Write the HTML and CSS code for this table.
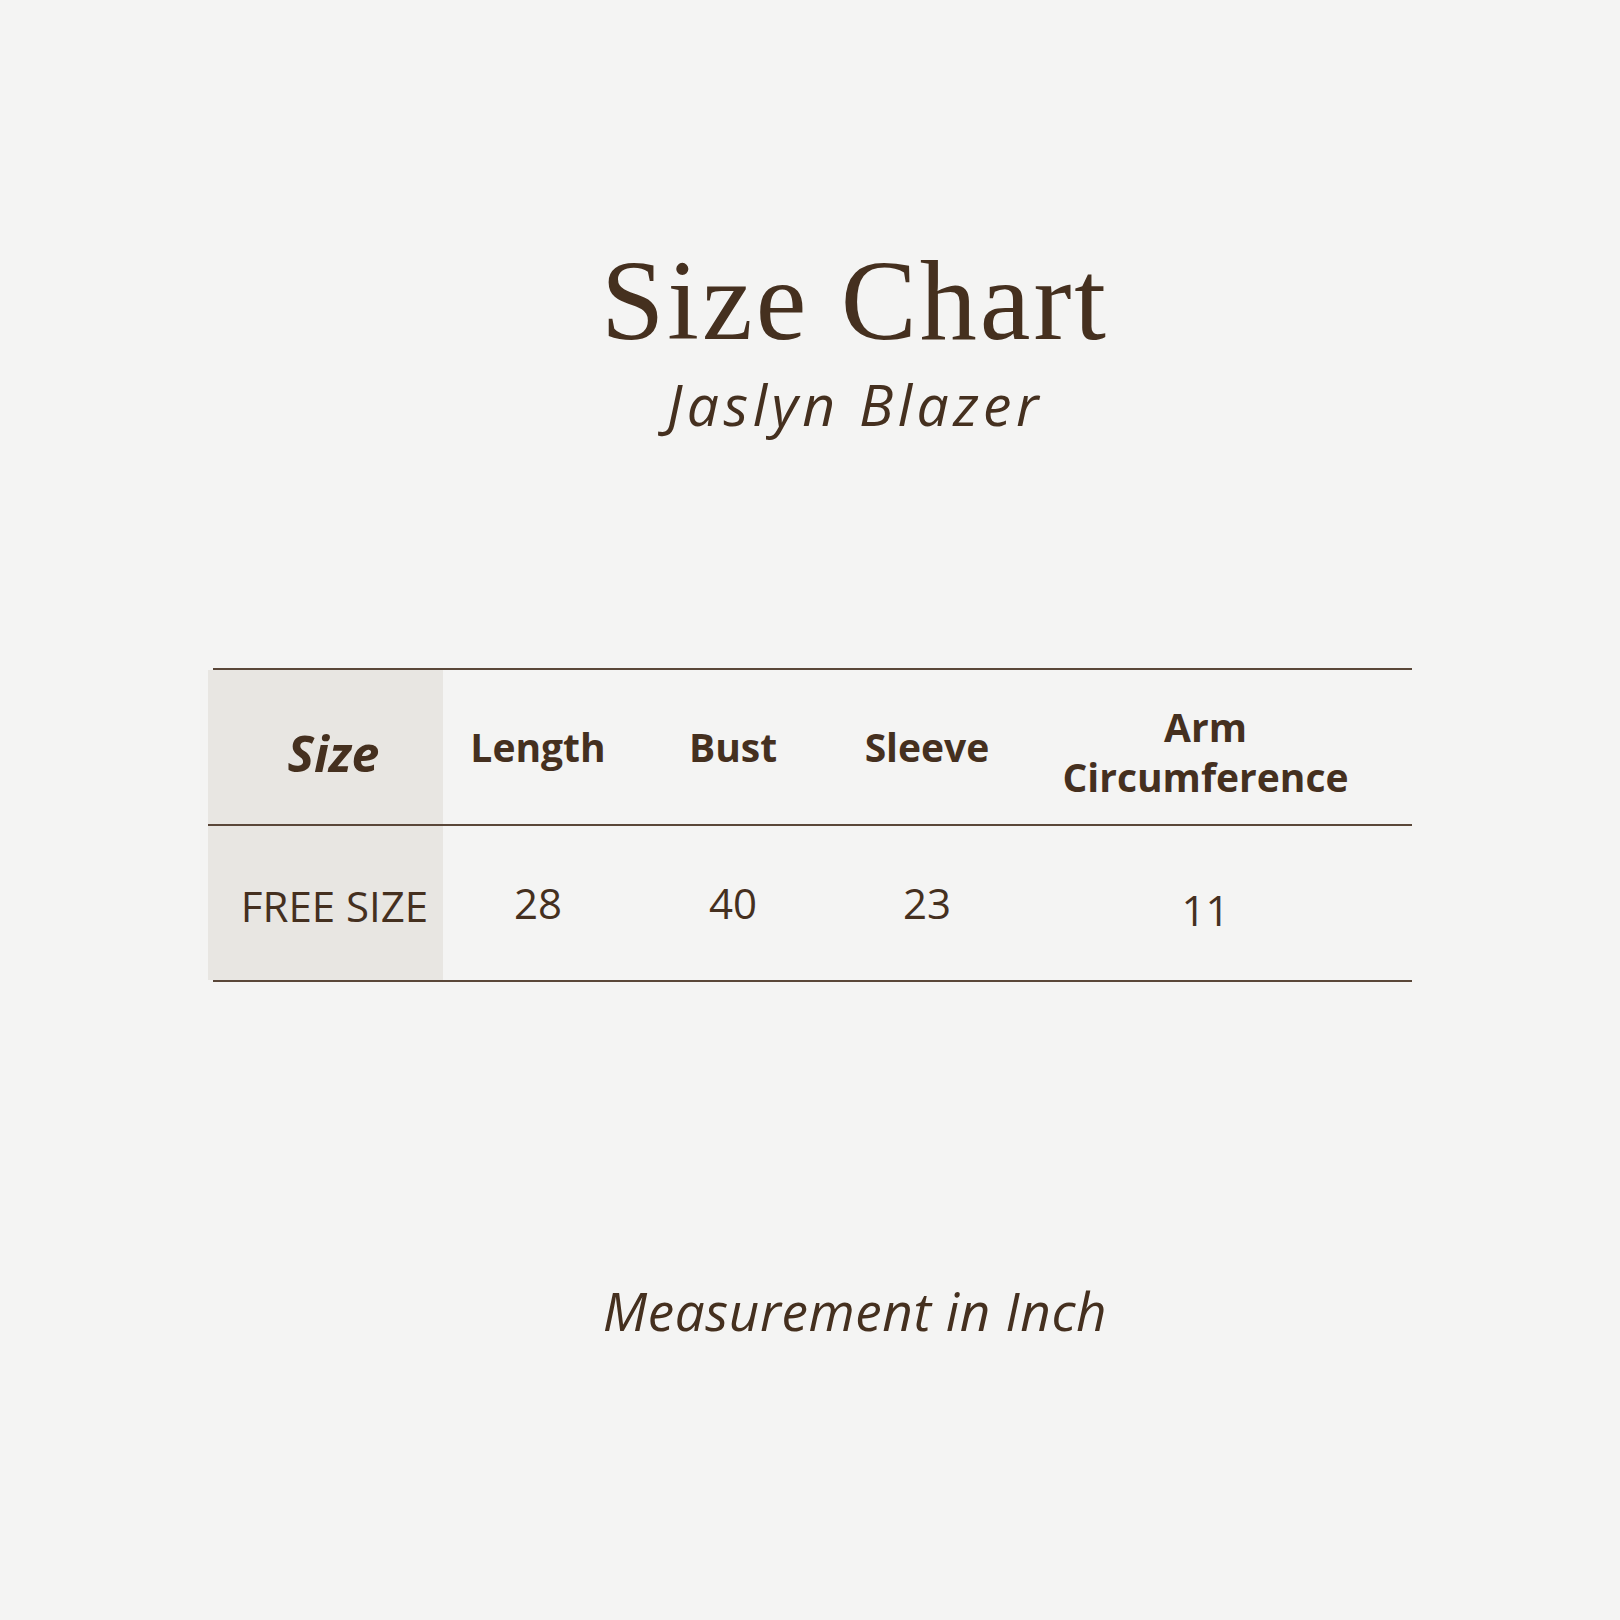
FILE: index.html
```html
<!DOCTYPE html>
<html lang="en">
<head>
<meta charset="utf-8">
<title>Size Chart</title>
<link rel="stylesheet" href="styles.css">
</head>
<body>
<main class="page">
  <header class="heading">
    <h1 class="title">Size Chart</h1>
    <p class="subtitle">Jaslyn Blazer</p>
  </header>
  <section class="chart">
    <div class="rule rule-inset"></div>
    <div class="row head">
      <div class="cell key key-head">Size</div>
      <div class="cell">Length</div>
      <div class="cell">Bust</div>
      <div class="cell">Sleeve</div>
      <div class="cell arm">Arm<br>Circumference</div>
    </div>
    <div class="rule"></div>
    <div class="row data">
      <div class="cell key key-data">FREE SIZE</div>
      <div class="cell num">28</div>
      <div class="cell num">40</div>
      <div class="cell num">23</div>
      <div class="cell num arm low">11</div>
    </div>
    <div class="rule rule-inset"></div>
  </section>
  <p class="note">Measurement in Inch</p>
</main>
</body>
</html>
```

FILE: styles.css
```css
html, body {
  margin: 0;
  padding: 0;
  background: #f4f4f3;
}

.page {
  width: 1620px;
  height: 1620px;
  box-sizing: border-box;
  padding-top: 244px;
  display: flex;
  flex-direction: column;
  color: #45301f;
}

.heading {
  padding-left: 90px;
  text-align: center;
}

.title {
  margin: 0;
  font-family: "Liberation Serif", "DejaVu Serif", serif;
  font-weight: 400;
  font-size: 114px;
  line-height: 114px;
  letter-spacing: 3px;
}

.subtitle {
  margin: 18px 0 0;
  font-family: "Open Sans", sans-serif;
  font-style: italic;
  font-weight: 400;
  font-size: 57px;
  line-height: 56px;
  letter-spacing: 4.5px;
}

.chart {
  margin-top: 236px;
  margin-left: 208px;
  width: 1204px;
  display: flex;
  flex-direction: column;
}

.rule {
  height: 2px;
  background: #5a4739;
}

.rule-inset {
  margin-left: 5px;
}

.row {
  display: grid;
  grid-template-columns: 235px 190px 200px 188px 1fr;
  height: 154px;
  font-family: "Open Sans", sans-serif;
}

.cell {
  display: flex;
  align-items: center;
  justify-content: center;
  text-align: center;
  box-sizing: border-box;
}

.head .cell {
  font-weight: 700;
  font-size: 39px;
  line-height: 50px;
}

.head .arm {
  padding-right: 22px;
  padding-top: 10px;
}

.key {
  background: #e8e6e2;
  padding-left: 16px;
}

.head .key-head {
  font-style: italic;
  font-size: 50px;
  padding-top: 12px;
}

.data .cell {
  font-weight: 400;
  font-size: 40px;
  line-height: 40px;
}

.data .key-data {
  font-size: 42px;
  padding-top: 6px;
  padding-left: 18px;
}

.data .num {
  font-size: 42px;
}

.data .arm {
  padding-right: 22px;
}

.data .low {
  padding-top: 14px;
}

.note {
  margin: 302px 0 0;
  padding-left: 90px;
  text-align: center;
  font-family: "Open Sans", sans-serif;
  font-style: italic;
  font-size: 53px;
  line-height: 53px;
  letter-spacing: 0.6px;
}
```
